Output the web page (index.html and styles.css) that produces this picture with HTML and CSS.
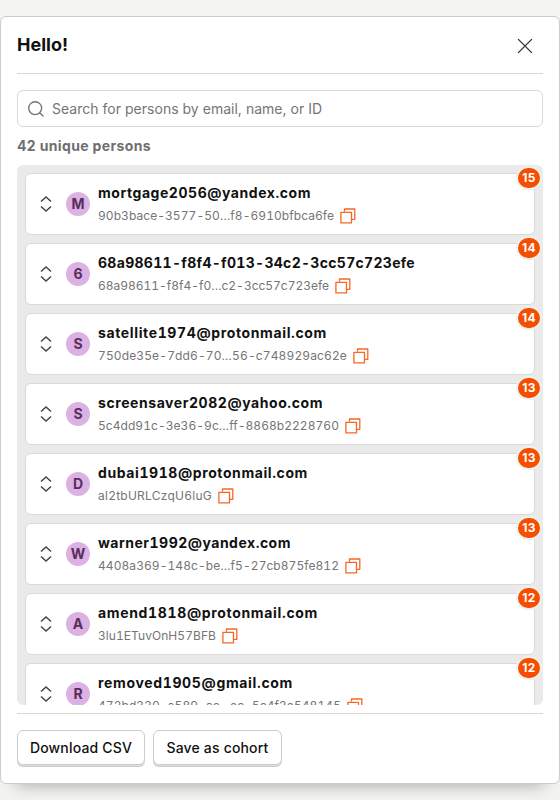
FILE: index.html
```
<!DOCTYPE html>
<html lang="en">
<head>
<meta charset="utf-8">
<title>Persons</title>
<link rel="stylesheet" href="styles.css">
</head>
<body>
<svg class="defs" aria-hidden="true">
  <symbol id="expand" viewBox="0 0 24 24"><path d="M6 9 12 3.500l6 5.500M6 15l6 5.500 6-5.500" fill="none" stroke="currentColor" stroke-width="1.800"/></symbol>
  <symbol id="copy" viewBox="0 0 18 18"><path d="M5.500 4.500V2h10.300v10.300h-3M1.900 5.300h10.600v10.600H1.900z" fill="none" stroke="currentColor" stroke-width="1.300" stroke-linejoin="round"/></symbol>
</svg>
<main class="modal">
  <header class="modal-header">
    <h1>Hello!</h1>
    <button class="close" aria-label="close"><svg viewBox="0 0 24 24"><path d="m4.500 4.500 15 15m0-15-15 15" fill="none" stroke="currentColor" stroke-width="1.500"/></svg></button>
  </header>
  <section class="content">
    <label class="search">
      <svg viewBox="0 0 24 24"><path d="M11 3.250a7.750 7.750 0 1 0 0 15.500 7.750 7.750 0 0 0 0-15.500Zm5.500 13.250 4.500 4.500" fill="none" stroke="currentColor" stroke-width="1.600"/></svg>
      <input type="search" placeholder="Search for persons by email, name, or ID">
    </label>
    <p class="count">42 unique persons</p>
    <div class="list" id="list"></div>
  </section>
  <footer class="modal-footer">
    <button class="button">Download CSV</button>
    <button class="button wide">Save as cohort</button>
  </footer>
</main>
<script src="script.js"></script>
</body>
</html>
```
FILE: styles.css
```
* { box-sizing: border-box; }
body {
  margin: 0;
  height: 800px;
  padding: 16px 0;
  overflow: hidden;
  background: #f3f4ef;
  color: #111;
  font: 14px/20px Inter, sans-serif;
}
svg { display: block; flex: none; }
button { font: inherit; color: inherit; }
.defs { display: none; }
.modal {
  display: flex;
  flex-direction: column;
  height: 768px;
  padding: 0 16px;
  border: 1px solid #ccc;
  border-radius: 6px;
  background: #fff;
  box-shadow: 0 16px 16px -16px rgba(0, 0, 0, 0.35);
}
.modal-header {
  display: flex;
  align-items: center;
  justify-content: space-between;
  height: 57px;
  border-bottom: 1px solid #dadad2;
}
h1 { margin: 0; font-size: 18px; line-height: 24px; font-weight: 700; }
.close {
  display: flex;
  align-items: center;
  justify-content: center;
  width: 36px;
  height: 36px;
  padding: 0;
  border: 0;
  background: none;
  color: #333;
  margin-top: 2px;
}
.close svg { width: 22px; height: 22px; }
.content {
  display: flex;
  flex-direction: column;
  flex: 1;
  min-height: 0;
  padding: 16px 0 8px;
}
.search {
  display: flex;
  align-items: center;
  flex: none;
  height: 37px;
  gap: 6px;
  padding: 0 8px;
  border: 1px solid #dadad2;
  border-radius: 6px;
  color: #737373;
}
.search svg { width: 20px; height: 20px; }
.search input {
  flex: 1;
  padding: 0;
  border: 0;
  outline: 0;
  background: none;
  font: inherit;
  letter-spacing: 0.02px;
}
.search input::placeholder { color: #757575; opacity: 1; }
.count { margin: 9px 0; font-weight: 700; letter-spacing: 0.36px; color: #6f6f6f; }
.list {
  display: flex;
  flex-direction: column;
  flex: 1;
  min-height: 0;
  gap: 8px;
  padding: 8px;
  overflow: hidden;
  border-radius: 6px;
  background: #eaeaea;
}
.row {
  position: relative;
  display: flex;
  align-items: center;
  flex: none;
  height: 62px;
  padding: 0 10px 0 8px;
  border: 1px solid #dadad2;
  border-radius: 6px;
  background: #fff;
}
.expand { width: 20px; height: 20px; margin: 0 10px 0 2px; color: #444; }
.avatar {
  width: 24px;
  height: 24px;
  margin-right: 8px;
  border-radius: 50%;
  background: #dcb1e3;
  color: #572e5e;
  font-weight: 700;
  line-height: 24px;
  text-align: center;
}
.name { font-weight: 700; line-height: 20px; margin-top: 2px; }
.name span, .id span { white-space: nowrap; font-variant-numeric: tabular-nums; }
.id {
  display: flex;
  align-items: center;
  gap: 5px;
  height: 24px;
  margin-top: 1px;
  color: #757575;
  font-size: 12px;
}
.copy { width: 18px; height: 18px; color: #f54e00; opacity: 0.85; }
.badge {
  position: absolute;
  top: -8px;
  right: -8px;
  min-width: 26px;
  height: 24px;
  padding: 0 3px;
  border: 2px solid #f0f0ec;
  border-radius: 12px;
  background: #f54e00;
  color: #fff;
  font-size: 12px;
  font-weight: 700;
  letter-spacing: 0.3px;
  line-height: 19px;
  text-align: center;
}
.modal-footer {
  display: flex;
  align-items: flex-start;
  gap: 8px;
  height: 70px;
  padding-top: 16px;
  border-top: 1px solid #dadad2;
}
.button {
  width: 128px;
  height: 35px;
  padding: 0;
  border: 1px solid #ccc;
  border-radius: 6px;
  background: #fff;
  font-weight: 500;
  letter-spacing: 0.18px;
  white-space: nowrap;
  box-shadow: 0 1px 0 #dedede, 0 2px 0 #ccc;
}
.button.wide { width: 129px; }
```
FILE: script.js
```
// name, id, event count, then the widths of the name and id labels in px
const persons = [
  ["mortgage2056@yandex.com", "90b3bace-3577-50…f8-6910bfbca6fe", 15, 213, 236],
  ["68a98611-f8f4-f013-34c2-3cc57c723efe", "68a98611-f8f4-f0…c2-3cc57c723efe", 14, 317, 231],
  ["satellite1974@protonmail.com", "750de35e-7dd6-70…56-c748929ac62e", 14, 229, 249],
  ["screensaver2082@yahoo.com", "5c4dd91c-3e36-9c…ff-8868b2228760", 13, 225, 241],
  ["dubai1918@protonmail.com", "al2tbURLCzqU6luG", 13, 210, 114],
  ["warner1992@yandex.com", "4408a369-148c-be…f5-27cb875fe812", 13, 193, 241],
  ["amend1818@protonmail.com", "3lu1ETuvOnH57BFB", 12, 220, 118],
  ["removed1905@gmail.com", "472bd330-a589-ac…ec-5c4f3e548145", 12, 195, 243]
];
document.getElementById("list").innerHTML = persons.map(([name, id, count, nameWidth, idWidth]) => `
  <article class="row">
    <svg class="expand"><use href="#expand"/></svg>
    <span class="avatar">${name[0].toUpperCase()}</span>
    <div>
      <div class="name"><span data-width="${nameWidth}">${name}</span></div>
      <div class="id"><span data-width="${idWidth}">${id}</span><svg class="copy"><use href="#copy"/></svg></div>
    </div>
    <span class="badge">${count}</span>
  </article>`).join("");

// Track each label out to its width
document.querySelectorAll("[data-width]").forEach(label => {
  const extra = label.dataset.width - label.getBoundingClientRect().width;
  label.style.letterSpacing = `${extra / label.textContent.length}px`;
});
```
